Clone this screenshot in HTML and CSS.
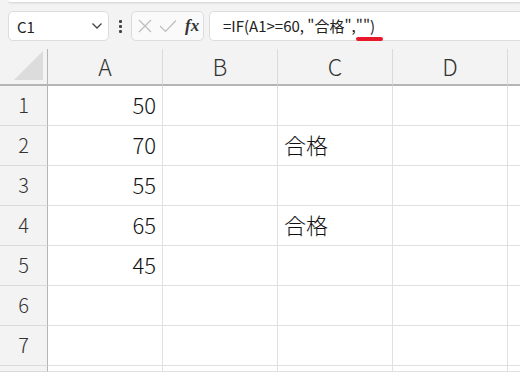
FILE: index.html
```html
<!DOCTYPE html>
<html lang="ja">
<head>
  <meta charset="UTF-8">
  <title>IF 関数</title>
  <link rel="stylesheet" href="styles.css">
</head>
<body>
  <div class="ribbon-edge"></div>

  <div class="formula-row">
    <div class="name-box">
      <span>C1</span>
      <svg class="chev" width="12" height="8" viewBox="0 0 12 8"><path d="M1.5 1.5 L6 6 L10.5 1.5" fill="none" stroke="#444" stroke-width="1.3"/></svg>
    </div>
    <div class="dots"><i></i><i></i><i></i></div>
    <div class="btn-group">
      <svg width="14" height="14" viewBox="0 0 14 14"><path d="M1 1 L13 13 M13 1 L1 13" stroke="#bdbdbd" stroke-width="1.2"/></svg>
      <svg width="18" height="14" viewBox="0 0 18 14"><path d="M1 7 L6.5 12.5 L17 1.5" fill="none" stroke="#bdbdbd" stroke-width="1.2"/></svg>
      <span class="fx">fx</span>
    </div>
    <div class="formula">
      <span>=IF(A1&gt;=60, "合格","")</span>
      <span class="mark"></span>
    </div>
  </div>

  <div class="sheet">
    <div class="corner"><div class="tri"></div></div>
    <div class="col-head">A</div>
    <div class="col-head">B</div>
    <div class="col-head">C</div>
    <div class="col-head">D</div>
    <div class="col-head"></div>

    <div class="row-head">1</div><div class="cell num">50</div><div class="cell"></div><div class="cell"></div><div class="cell"></div><div class="cell"></div>
    <div class="row-head">2</div><div class="cell num">70</div><div class="cell"></div><div class="cell">合格</div><div class="cell"></div><div class="cell"></div>
    <div class="row-head">3</div><div class="cell num">55</div><div class="cell"></div><div class="cell"></div><div class="cell"></div><div class="cell"></div>
    <div class="row-head">4</div><div class="cell num">65</div><div class="cell"></div><div class="cell">合格</div><div class="cell"></div><div class="cell"></div>
    <div class="row-head">5</div><div class="cell num">45</div><div class="cell"></div><div class="cell"></div><div class="cell"></div><div class="cell"></div>
    <div class="row-head">6</div><div class="cell"></div><div class="cell"></div><div class="cell"></div><div class="cell"></div><div class="cell"></div>
    <div class="row-head">7</div><div class="cell"></div><div class="cell"></div><div class="cell"></div><div class="cell"></div><div class="cell"></div>
    <div class="row-head"></div><div class="cell"></div><div class="cell"></div><div class="cell"></div><div class="cell"></div><div class="cell"></div>
  </div>
</body>
</html>
```

FILE: styles.css
```css
body {
  margin: 0;
  width: 520px;
  height: 372px;
  overflow: hidden;
  background-color: #f3f3f3;
  font-family: "Noto Sans CJK JP", "Noto Sans", sans-serif;
  color: #222;
}
.ribbon-edge {
  height: 2px;
  margin-left: 8px;
  background-color: #ffffff;
  border-bottom: 1px solid #dcdcdc;
  border-bottom-left-radius: 6px;
  box-shadow: 0 1px 2px rgba(0,0,0,0.06);
}
.formula-row {
  display: flex;
  align-items: center;
  height: 30px;
  margin-top: 8px;
  padding-left: 8px;
}
.name-box {
  display: flex;
  align-items: center;
  justify-content: space-between;
  box-sizing: border-box;
  width: 101px;
  height: 30px;
  padding: 0 5px 0 8px;
  background-color: #ffffff;
  border: 1px solid #dcdcdc;
  border-radius: 5px;
  font-size: 15px;
}
.dots {
  display: flex;
  flex-direction: column;
  gap: 2px;
  width: 22px;
  align-items: center;
}
.dots i {
  width: 3px;
  height: 3px;
  background-color: #444;
  border-radius: 1px;
}
.btn-group {
  display: flex;
  align-items: center;
  gap: 7px;
  box-sizing: border-box;
  width: 73px;
  height: 30px;
  padding-left: 6px;
  background-color: #fafafa;
  border: 1px solid #dcdcdc;
  border-radius: 5px;
}
.fx {
  font-family: "Liberation Serif", serif;
  font-style: italic;
  font-weight: bold;
  font-size: 17px;
  color: #333;
  margin-left: 1px;
}
.formula {
  position: relative;
  flex: 1;
  box-sizing: border-box;
  height: 30px;
  margin-left: 5px;
  padding-left: 13px;
  line-height: 28px;
  background-color: #ffffff;
  border: 1px solid #dcdcdc;
  border-right: none;
  border-radius: 5px 0 0 5px;
  font-size: 15px;
}
.mark {
  position: absolute;
  left: 146px;
  top: 25px;
  width: 27px;
  height: 4px;
  background-color: #e8182b;
  border-radius: 2px;
}
.sheet {
  display: grid;
  grid-template-columns: 48px 115px 115px 115px 115px 1fr;
  grid-template-rows: 37px repeat(7, 40px) 6px;
  margin-top: 8px;
}
.corner {
  display: flex;
  align-items: flex-end;
  justify-content: flex-end;
  padding: 0 4px 4px 0;
  border-right: 1px solid #b5b5b5;
  border-bottom: 2px solid #b5b5b5;
}
.tri {
  width: 29px;
  height: 29px;
  background-color: #dcdcdc;
  clip-path: polygon(100% 0, 100% 100%, 0 100%);
}
.col-head {
  display: flex;
  align-items: center;
  justify-content: center;
  padding-bottom: 2px;
  font-size: 23px;
  font-weight: 300;
  color: #333;
  border-right: 1px solid #dadada;
  border-bottom: 2px solid #b5b5b5;
}
.row-head {
  display: flex;
  align-items: center;
  justify-content: center;
  padding-bottom: 3px;
  font-size: 20px;
  font-weight: 300;
  color: #333;
  border-right: 1px solid #b5b5b5;
  border-bottom: 1px solid #dadada;
}
.cell {
  display: flex;
  align-items: center;
  padding: 0 6px 4px;
  font-size: 22px;
  font-weight: 300;
  color: #111;
  background-color: #ffffff;
  border-right: 1px solid #e0e0e0;
  border-bottom: 1px solid #e0e0e0;
}
.num {
  justify-content: flex-end;
}
```
